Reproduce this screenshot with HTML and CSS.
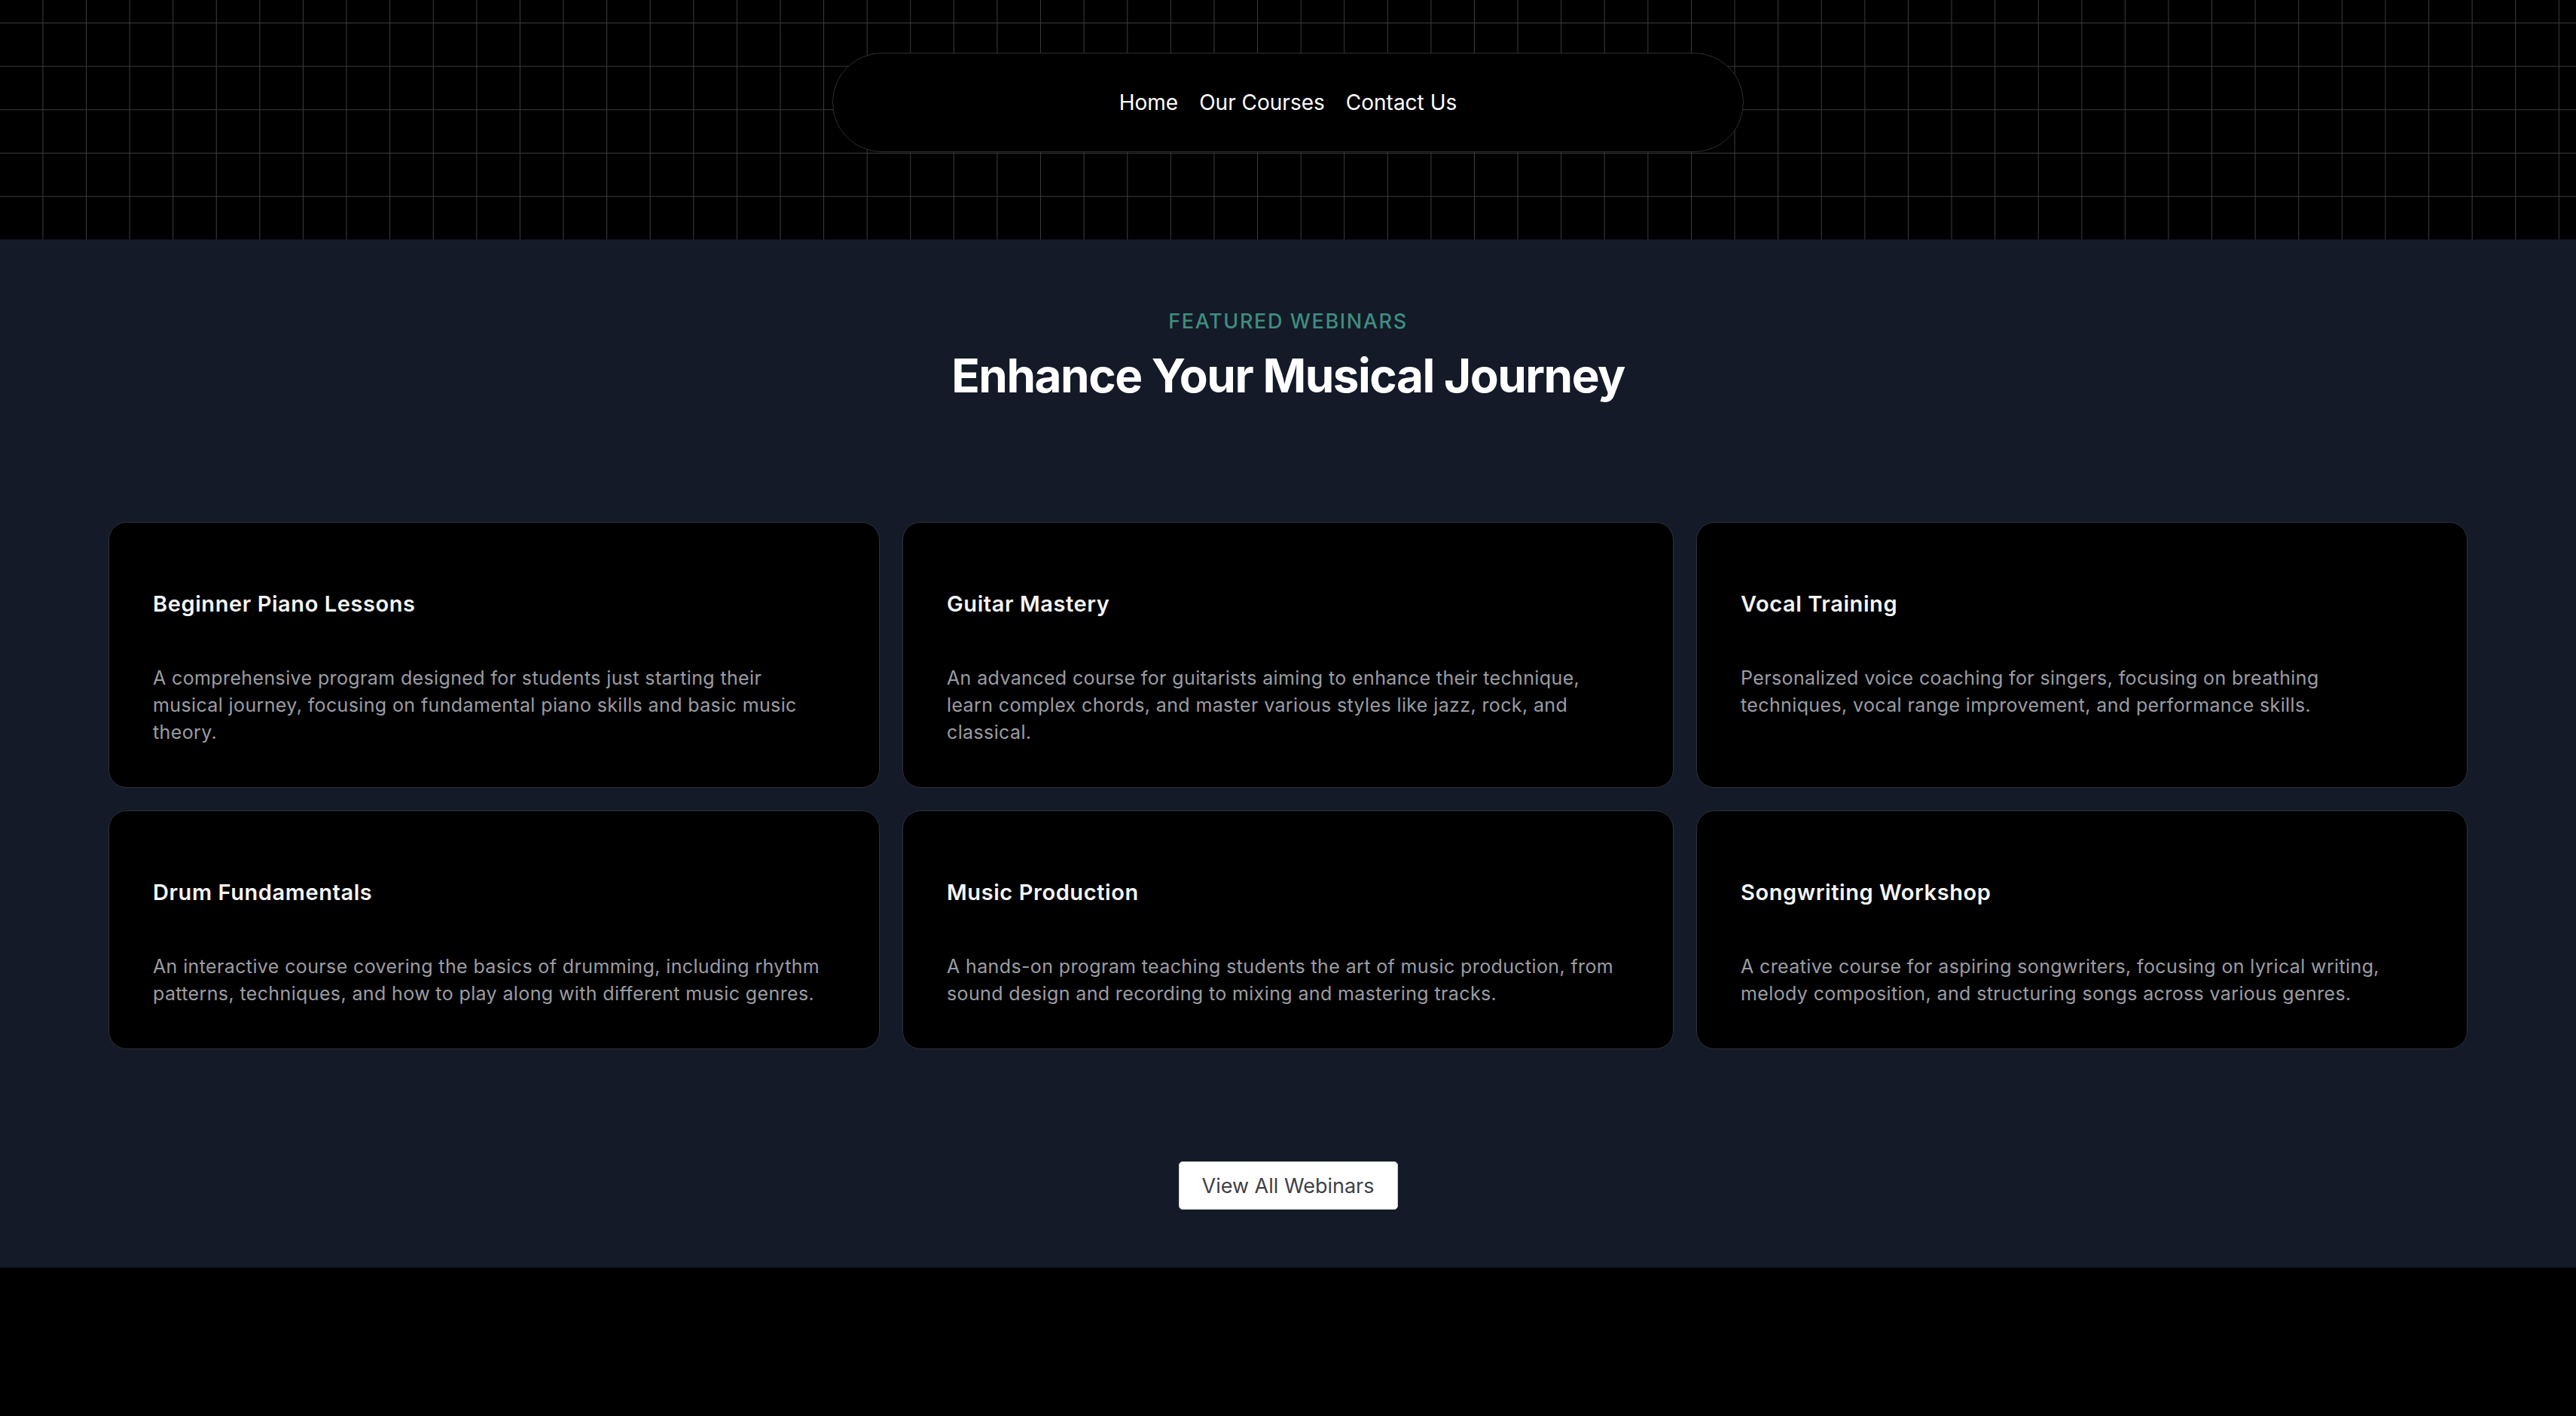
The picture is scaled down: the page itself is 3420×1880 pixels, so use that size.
FILE: index.html
```html
<!DOCTYPE html>
<html lang="en">
<head>
<meta charset="utf-8">
<title>Featured Webinars</title>
<link rel="stylesheet" href="styles.css">
</head>
<body>
<header class="hero">
  <nav class="nav-pill">
    <a class="nav-link" href="#">Home</a>
    <a class="nav-link" href="#">Our Courses</a>
    <a class="nav-link" href="#">Contact Us</a>
  </nav>
</header>
<section class="webinars">
  <p class="eyebrow">FEATURED WEBINARS</p>
  <h1 class="title">Enhance Your Musical Journey</h1>
  <div class="grid">
    <article class="card">
      <h3 class="card-title">Beginner Piano Lessons</h3>
      <p class="card-text">A comprehensive program designed for students just starting their musical journey, focusing on fundamental piano skills and basic music theory.</p>
    </article>
    <article class="card">
      <h3 class="card-title">Guitar Mastery</h3>
      <p class="card-text">An advanced course for guitarists aiming to enhance their technique, learn complex chords, and master various styles like jazz, rock, and classical.</p>
    </article>
    <article class="card">
      <h3 class="card-title">Vocal Training</h3>
      <p class="card-text">Personalized voice coaching for singers, focusing on breathing techniques, vocal range improvement, and performance skills.</p>
    </article>
    <article class="card">
      <h3 class="card-title">Drum Fundamentals</h3>
      <p class="card-text">An interactive course covering the basics of drumming, including rhythm patterns, techniques, and how to play along with different music genres.</p>
    </article>
    <article class="card">
      <h3 class="card-title">Music Production</h3>
      <p class="card-text">A hands-on program teaching students the art of music production, from sound design and recording to mixing and mastering tracks.</p>
    </article>
    <article class="card">
      <h3 class="card-title">Songwriting Workshop</h3>
      <p class="card-text">A creative course for aspiring songwriters, focusing on lyrical writing, melody composition, and structuring songs across various genres.</p>
    </article>
  </div>
  <div class="actions">
    <a class="btn" href="#">View All Webinars</a>
  </div>
</section>
<footer class="footer"></footer>
</body>
</html>
```

FILE: styles.css
```css
* { box-sizing: border-box; }

html, body {
  margin: 0;
  padding: 0;
  background: #000;
  font-family: "Inter", "Noto Sans", sans-serif;
  color: #fff;
}

.hero {
  height: 318px;
  background-color: #000;
  background-image:
    linear-gradient(to right, #3c3c3c 0, #3c3c3c 1.4px, transparent 1.4px),
    linear-gradient(to bottom, #3c3c3c 0, #3c3c3c 1.4px, transparent 1.4px);
  background-size: 57.6px 57.6px;
  background-position: 56.4px 30px;
  display: flex;
  justify-content: center;
  padding-top: 70px;
}

.nav-pill {
  width: 1210px;
  height: 132px;
  border: 1.5px solid #2f2f2f;
  border-radius: 66px;
  background: #000;
  display: flex;
  align-items: center;
  justify-content: center;
  gap: 28px;
}

.nav-link {
  color: #fff;
  text-decoration: none;
  font-size: 28px;
  line-height: 1.5;
  font-weight: 400;
}

.webinars {
  background: #141a27;
  padding: 89px 144px 77px;
  display: flex;
  flex-direction: column;
  align-items: center;
}

.eyebrow {
  margin: 0;
  font-size: 27px;
  line-height: 39px;
  font-weight: 500;
  letter-spacing: 0.06em;
  color: #3f8d80;
}

.title {
  margin: 22px 0 0;
  font-size: 62px;
  line-height: 62px;
  font-weight: 700;
  letter-spacing: -0.024em;
  color: #fff;
}

.grid {
  margin-top: 163px;
  width: 100%;
  display: grid;
  grid-template-columns: repeat(3, 1fr);
  gap: 30px;
}

.card {
  background: #000;
  border: 1.5px solid #2c3039;
  border-radius: 24px;
  padding: 87px 64px 55px 58px;
}

.card-title {
  margin: 0;
  font-size: 29px;
  line-height: 42px;
  font-weight: 600;
  letter-spacing: 0.02em;
  color: #f5f5f5;
}

.card-text {
  margin: 59px 0 0;
  font-size: 25px;
  line-height: 36px;
  font-weight: 400;
  letter-spacing: 0.015em;
  color: #9b9ca3;
}

.actions {
  margin-top: 149px;
  display: flex;
  justify-content: center;
}

.btn {
  display: flex;
  align-items: center;
  height: 64px;
  padding: 0 30px;
  background: #fff;
  border: 1px solid #d4d4d8;
  border-radius: 5px;
  color: #3f3f46;
  font-size: 27px;
  text-decoration: none;
}

.footer {
  height: 198px;
  background: #000;
}
```
